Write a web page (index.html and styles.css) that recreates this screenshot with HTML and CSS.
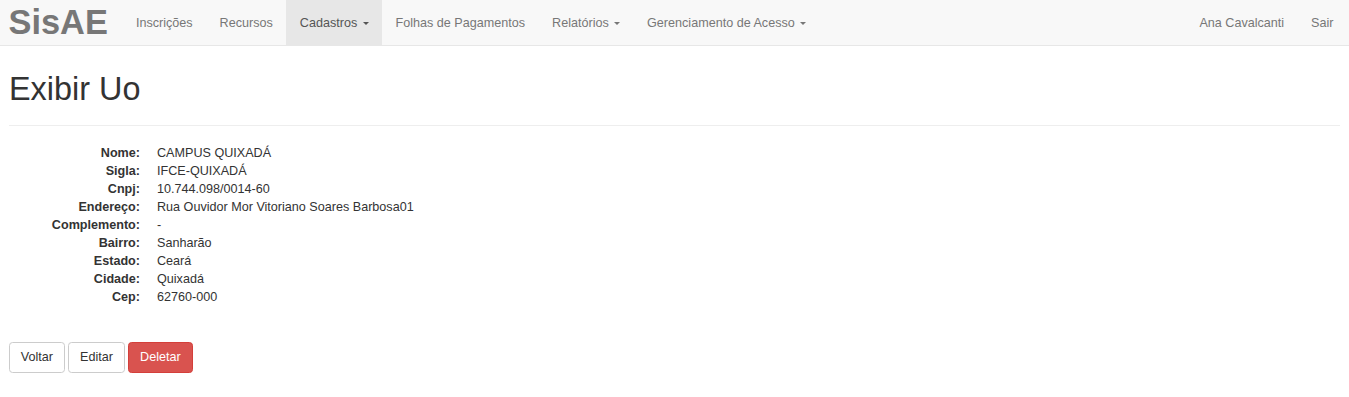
FILE: index.html
```html
<!DOCTYPE html>
<html lang="pt-BR">
<head>
<meta charset="utf-8">
<title>SisAE - Exibir Uo</title>
<link rel="stylesheet" href="styles.css">
</head>
<body>
<nav class="navbar">
  <a class="brand" href="#">SisAE</a>
  <ul class="nav">
    <li><a href="#">Inscrições</a></li>
    <li><a href="#">Recursos</a></li>
    <li class="active"><a href="#">Cadastros <span class="caret"></span></a></li>
    <li><a href="#">Folhas de Pagamentos</a></li>
    <li><a href="#">Relatórios <span class="caret"></span></a></li>
    <li><a href="#">Gerenciamento de Acesso <span class="caret"></span></a></li>
  </ul>
  <ul class="nav nav-right">
    <li><a href="#">Ana Cavalcanti</a></li>
    <li><a href="#">Sair</a></li>
  </ul>
</nav>
<main class="container">
  <div class="page-header">
    <h1>Exibir Uo</h1>
  </div>
  <dl class="details">
    <dt>Nome:</dt><dd>CAMPUS QUIXADÁ</dd>
    <dt>Sigla:</dt><dd>IFCE-QUIXADÁ</dd>
    <dt>Cnpj:</dt><dd>10.744.098/0014-60</dd>
    <dt>Endereço:</dt><dd>Rua Ouvidor Mor Vitoriano Soares Barbosa01</dd>
    <dt>Complemento:</dt><dd>-</dd>
    <dt>Bairro:</dt><dd>Sanharão</dd>
    <dt>Estado:</dt><dd>Ceará</dd>
    <dt>Cidade:</dt><dd>Quixadá</dd>
    <dt>Cep:</dt><dd>62760-000</dd>
  </dl>
  <div class="actions">
    <a class="btn" href="#">Voltar</a>
    <a class="btn" href="#">Editar</a>
    <a class="btn btn-danger" href="#">Deletar</a>
  </div>
</main>
</body>
</html>
```
FILE: styles.css
```css
html, body {
  margin: 0;
  padding: 0;
}
body {
  font-family: "Liberation Sans", Arial, Helvetica, sans-serif;
  font-size: 12.6px;
  line-height: 18px;
  color: #333;
  background: #fff;
}
a {
  text-decoration: none;
}

.navbar {
  display: flex;
  align-items: stretch;
  height: 45px;
  background: #f8f8f8;
  border-bottom: 1px solid #e7e7e7;
}
.brand {
  display: block;
  padding: 0 14.5px 0 8.5px;
  font-size: 34.4px;
  font-weight: bold;
  line-height: 45px;
  color: #777;
}
.nav {
  display: flex;
  list-style: none;
  margin: 0;
  padding: 0;
}
.nav li {
  display: block;
}
.nav a {
  display: block;
  padding: 13.5px 13.5px;
  line-height: 18px;
  color: #777;
}
.nav .active a {
  background: #e7e7e7;
  color: #555;
}
.nav-right {
  margin-left: auto;
  padding-right: 2px;
}
.caret {
  display: inline-block;
  width: 0;
  height: 0;
  margin-left: 1.8px;
  vertical-align: middle;
  border-top: 3.6px solid;
  border-left: 3.6px solid transparent;
  border-right: 3.6px solid transparent;
}

.container {
  padding: 0 9px;
}
.page-header {
  padding-bottom: 8.1px;
  margin: 0 0 18px;
  border-bottom: 1px solid #eee;
}
.page-header h1 {
  margin: 26px 0 9px;
  font-size: 32.4px;
  font-weight: 500;
  line-height: 1.1;
  color: #333;
}

.details {
  display: grid;
  grid-template-columns: 131px 1fr;
  column-gap: 17px;
  margin: 0 0 36px;
}
.details dt {
  font-weight: bold;
  text-align: right;
}
.details dd {
  margin: 0;
}

.btn {
  display: inline-block;
  padding: 5.4px 10.8px;
  font-size: 12.6px;
  line-height: 18px;
  color: #333;
  background: #fff;
  border: 1px solid #ccc;
  border-radius: 3.6px;
  vertical-align: middle;
}
.btn-danger {
  color: #fff;
  background: #d9534f;
  border-color: #d43f3a;
}
```
